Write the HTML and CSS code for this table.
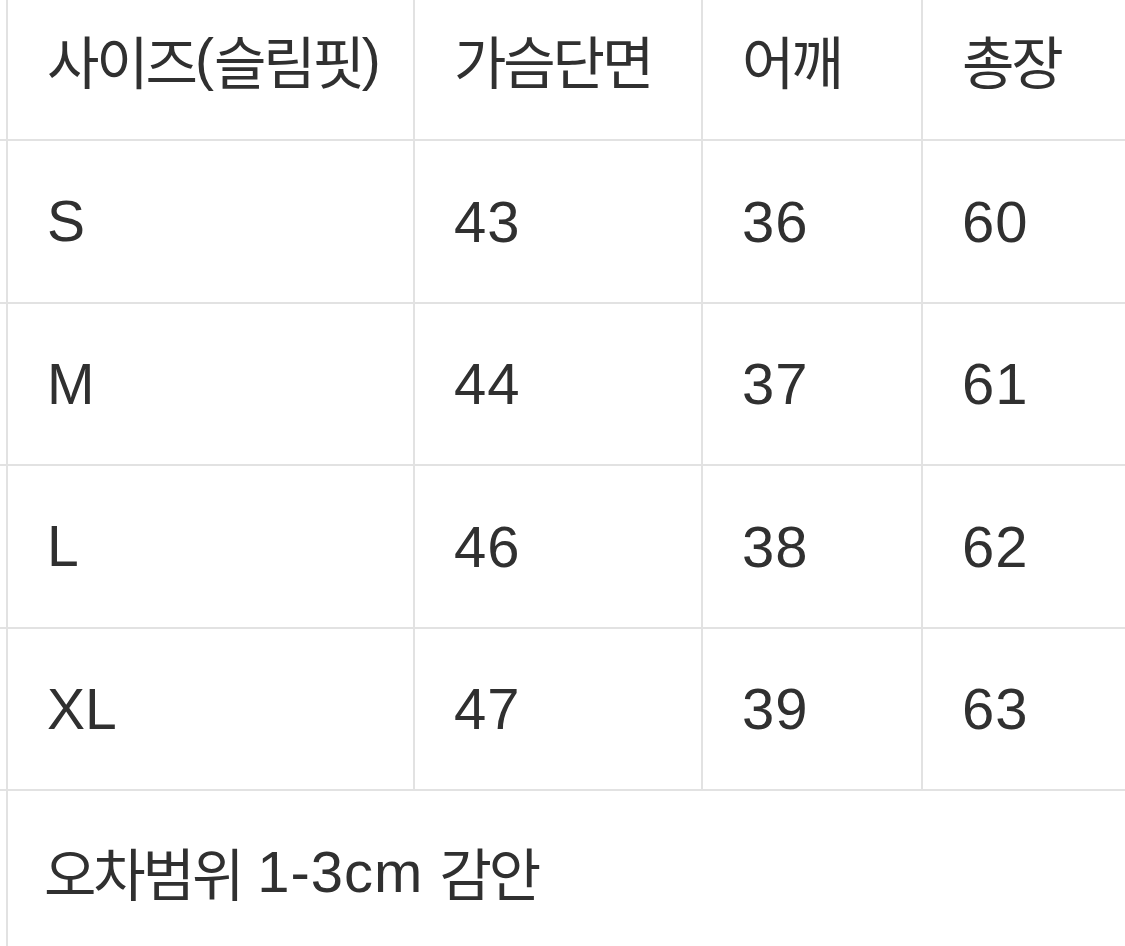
FILE: index.html
```html
<!DOCTYPE html>
<html lang="ko">
<head>
<meta charset="utf-8">
<title>사이즈표</title>
<link rel="stylesheet" href="styles.css">
</head>
<body>
<div class="sheet">
  <div class="grid">
    <div class="cell spacer"></div>
    <div class="cell"><span class="ko">사이즈</span>(<span class="ko">슬림핏</span>)</div>
    <div class="cell"><span class="ko">가슴단면</span></div>
    <div class="cell"><span class="ko">어깨</span></div>
    <div class="cell"><span class="ko">총장</span></div>

    <div class="cell spacer"></div>
    <div class="cell">S</div>
    <div class="cell num">43</div>
    <div class="cell num">36</div>
    <div class="cell num">60</div>

    <div class="cell spacer"></div>
    <div class="cell">M</div>
    <div class="cell num">44</div>
    <div class="cell num">37</div>
    <div class="cell num">61</div>

    <div class="cell spacer"></div>
    <div class="cell">L</div>
    <div class="cell num">46</div>
    <div class="cell num">38</div>
    <div class="cell num">62</div>

    <div class="cell spacer"></div>
    <div class="cell">XL</div>
    <div class="cell num">47</div>
    <div class="cell num">39</div>
    <div class="cell num">63</div>

    <div class="cell spacer"></div>
    <div class="cell note"><span class="ko">오차범위</span><span class="sp"> </span><span class="lat">1-3cm</span><span class="sp"> </span><span class="ko">감안</span></div>
  </div>
</div>
</body>
</html>
```

FILE: styles.css
```css
html, body {
  margin: 0;
  padding: 0;
  background: #ffffff;
  overflow: hidden;
}

.sheet {
  width: 1125px;
  height: 946px;
  overflow: hidden;
}

.grid {
  display: grid;
  grid-template-columns: 6px 405px 286px 218px 240px;
  grid-template-rows: repeat(6, 160.5px);
  gap: 2px;
  background: #e2e2e2;
  margin-top: -21.5px;
  width: max-content;
  font-family: "Liberation Sans", "Noto Sans CJK KR", sans-serif;
  font-size: 57px;
  color: #303030;
}

.cell {
  background: #ffffff;
  display: flex;
  align-items: center;
  padding-left: 39px;
  white-space: pre;
}

.cell.num {
  font-size: 58px;
  letter-spacing: 1px;
}

.cell.spacer {
  padding-left: 0;
}

.cell.note {
  grid-column: 2 / 6;
  padding-left: 36px;
}

.ko {
  font-family: "Noto Sans CJK KR", sans-serif;
  letter-spacing: -0.055em;
}

.lat {
  font-size: 58px;
  letter-spacing: 1px;
}

.sp {
  display: inline-block;
  width: 16px;
}
```
